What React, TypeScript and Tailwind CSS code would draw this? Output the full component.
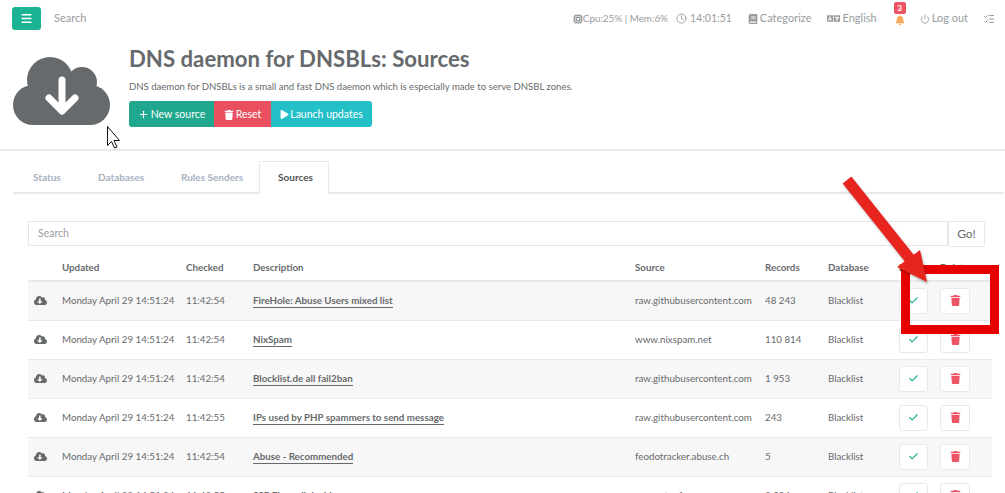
import { Check, Menu, Plus, Clock, Power, ListChecks, Cpu } from "lucide-react";
import { FaBell, FaBook, FaCloudDownloadAlt, FaLanguage, FaPlay, FaTrash } from "react-icons/fa";

const rows = [
  { date: "Monday April 29 14:51:24", checked: "11:42:54", name: "FireHole: Abuse Users mixed list", source: "raw.githubusercontent.com", records: "48 243" },
  { date: "Monday April 29 14:51:24", checked: "11:42:54", name: "NixSpam", source: "www.nixspam.net", records: "110 814" },
  { date: "Monday April 29 14:51:24", checked: "11:42:54", name: "Blocklist.de all fail2ban", source: "raw.githubusercontent.com", records: "1 953" },
  { date: "Monday April 29 14:51:24", checked: "11:42:55", name: "IPs used by PHP spammers to send message", source: "raw.githubusercontent.com", records: "243" },
  { date: "Monday April 29 14:51:24", checked: "11:42:54", name: "Abuse - Recommended", source: "feodotracker.abuse.ch", records: "5" },
  { date: "Monday April 29 14:51:24", checked: "11:42:55", name: "SSP Firewall dnsbl", source: "www.stopforumspam.com", records: "3 094" },
];

const App = () => {
  return (
    <div className="relative h-[493px] w-[1005px] overflow-hidden bg-white font-['Lato',sans-serif] text-[9.75px] text-[#676a6c]">
      {/* top bar */}
      <div className="flex h-[36px] items-center pl-[12px] pr-[10px] pt-[1px] text-[11px]">
        <button className="flex h-[23px] w-[29px] items-center justify-center rounded-[3px] bg-[#1ab394] text-white">
          <Menu size={13} strokeWidth={3} />
        </button>
        <span className="ml-[13px] text-[#999c9e]">Search</span>
        <div className="ml-auto flex items-center text-[#999c9e]">
          <Cpu size={10} strokeWidth={3} />
          <span className="text-[9.85px]">Cpu:25% | Mem:6%</span>
          <Clock size={11} className="ml-[8px] mr-[3px]" />
          <span className="text-[10.5px]">14:01:51</span>
          <FaBook size={10} className="ml-[16px] mr-[2px]" />
          <span>Categorize</span>
          <FaLanguage size={13} className="ml-[16px] mr-[2px]" />
          <span>English</span>
          <span className="relative ml-[17px] flex w-[12px] justify-center">
            <FaBell size={10} className="mt-[2px] text-[#f8ac59]" />
            <span className="absolute -top-[11px] left-0 flex h-[12px] w-[12px] items-center justify-center rounded-[2px] bg-[#ed5565] text-[8px] font-bold text-white">3</span>
          </span>
          <Power size={10} className="ml-[14px] mr-[2px]" />
          <span>Log out</span>
          <ListChecks size={12} className="ml-[15px]" />
        </div>
      </div>

      {/* heading */}
      <div className="flex h-[115px] border-b-2 border-[#e7eaec] pl-[13px]">
        <svg className="mt-[21px] h-[68px] w-[97px]" viewBox="0 0 97 68">
          <rect x="0" y="28" width="97" height="40" rx="20" fill="#676a6c" />
          <circle cx="37" cy="23" r="23" fill="#676a6c" />
          <circle cx="69" cy="25" r="15" fill="#676a6c" />
          <path d="M49 23V53M36 41L49 54L62 41" fill="none" stroke="white" strokeWidth="7" strokeLinecap="round" strokeLinejoin="round" />
        </svg>
        <div className="ml-[19px] pt-[8px]">
          <h1 className="text-[22.2px] font-bold leading-[30px]">DNS daemon for DNSBLs: Sources</h1>
          <p className="mt-[5px] text-[9.55px] leading-[16px]">DNS daemon for DNSBLs is a small and fast DNS daemon which is especially made to serve DNSBL zones.</p>
          <div className="mt-[6px] flex h-[26px] text-[10.5px] text-white">
            <button className="flex w-[85px] items-center justify-center gap-[2px] rounded-l-[3px] bg-[#1fa88d] pt-[1px]">
              <Plus size={11} strokeWidth={2.5} />New source
            </button>
            <button className="flex w-[57px] items-center justify-center gap-[2px] bg-[#e8505f] pt-[1px]">
              <FaTrash size={10} />Reset
            </button>
            <button className="flex w-[101px] items-center justify-center gap-[1px] rounded-r-[3px] bg-[#23c0c8] pt-[1px]">
              <FaPlay size={9} />Launch updates
            </button>
          </div>
        </div>
      </div>

      {/* tabs */}
      <div className="ml-[13px] mr-[1px] mt-[10px] flex h-[33px] items-stretch border-b-2 border-[#e7eaec] text-[10px] font-bold text-[#a7b1c2]">
        <span className="flex w-[64px] items-center pl-[20px] pt-[1px]">Status</span>
        <span className="flex w-[83px] items-center pl-[21px] pt-[1px]">Databases</span>
        <span className="flex w-[99px] items-center pl-[21px] pt-[1px]">Rules Senders</span>
        <span className="-mb-[2px] flex w-[70px] items-center justify-center rounded-t-[2px] border border-b-0 border-[#e7eaec] bg-white pb-[2px] pl-[3px] text-[#555]">Sources</span>
      </div>

      {/* content */}
      <div className="ml-[28px] mr-[13px] pt-[27px]">
        <div className="mr-[7px] flex h-[26px]">
          <div className="flex h-[25px] flex-1 items-center border border-[#e5e6e7] pl-[9px] text-[10.5px] text-[#9a9c9e]">Search</div>
          <button className="h-[26px] w-[37px] rounded-r-[2px] border border-[#e7eaec] bg-white text-[12px]">Go!</button>
        </div>
        <table className="mt-[7px] w-[964px] table-fixed border-collapse">
          <colgroup>
            <col className="w-[34px]" />
            <col className="w-[124px]" />
            <col className="w-[67px]" />
            <col className="w-[382px]" />
            <col className="w-[130px]" />
            <col className="w-[63px]" />
            <col className="w-[71px]" />
            <col className="w-[41px]" />
            <col className="w-[52px]" />
          </colgroup>
          <thead>
            <tr className="h-[27px] border-b-2 border-[#e7eaec] text-left">
              <th></th>
              <th className="font-bold">Updated</th>
              <th className="font-bold">Checked</th>
              <th className="font-bold">Description</th>
              <th className="font-bold">Source</th>
              <th className="font-bold">Records</th>
              <th className="font-bold">Database</th>
              <th className="font-bold">Enable</th>
              <th className="font-bold">Delete</th>
            </tr>
          </thead>
          <tbody>
            {rows.map((row, index) => (
              <tr key={index} className={`h-[39px] border-b border-[#e7eaec] ${index % 2 === 0 ? "bg-[#f7f7f7]" : "bg-white"}`}>
                <td className="pl-[6px]"><FaCloudDownloadAlt size={13} /></td>
                <td className="whitespace-nowrap">{row.date}</td>
                <td>{row.checked}</td>
                <td>
                  <span className="border-b border-[#676a6c] pb-[1px] font-bold">{row.name}</span>
                </td>
                <td>{row.source}</td>
                <td>{row.records}</td>
                <td>Blacklist</td>
                <td>
                  <span className="flex h-[26px] w-[29px] items-center justify-center rounded-[3px] border border-[#e7eaec] bg-white text-[#1ab394]">
                    <Check size={11} strokeWidth={2.5} />
                  </span>
                </td>
                <td>
                  <span className="flex h-[26px] w-[30px] items-center justify-center rounded-[3px] border border-[#e7eaec] bg-white text-[#ed5565]">
                    <FaTrash size={11} />
                  </span>
                </td>
              </tr>
            ))}
          </tbody>
        </table>
      </div>

      {/* annotation laid over the screenshot */}
      <svg className="absolute left-[100px] top-[120px] h-[30px] w-[20px]" viewBox="0 0 20 30">
        <path d="M7.500 6.500v19l4-4 3 6.500 2.500-1-3-6.500h5.500z" fill="white" stroke="#111" strokeWidth="1" />
      </svg>
      <div className="absolute left-[901px] top-[265px] h-[69px] w-[98px] border-[9px] border-[#e60000]"></div>
      <svg className="absolute left-[830px] top-[165px] h-[125px] w-[100px] drop-shadow-[1px_2px_1px_rgba(0,0,0,0.3)]" viewBox="0 0 100 125">
        <path d="M17 15 L80 94" stroke="#e8241f" strokeWidth="11" />
        <path d="M67 102 L90 85 L97 117 Z" fill="#e8241f" />
      </svg>
    </div>
  );
};

export default App;
